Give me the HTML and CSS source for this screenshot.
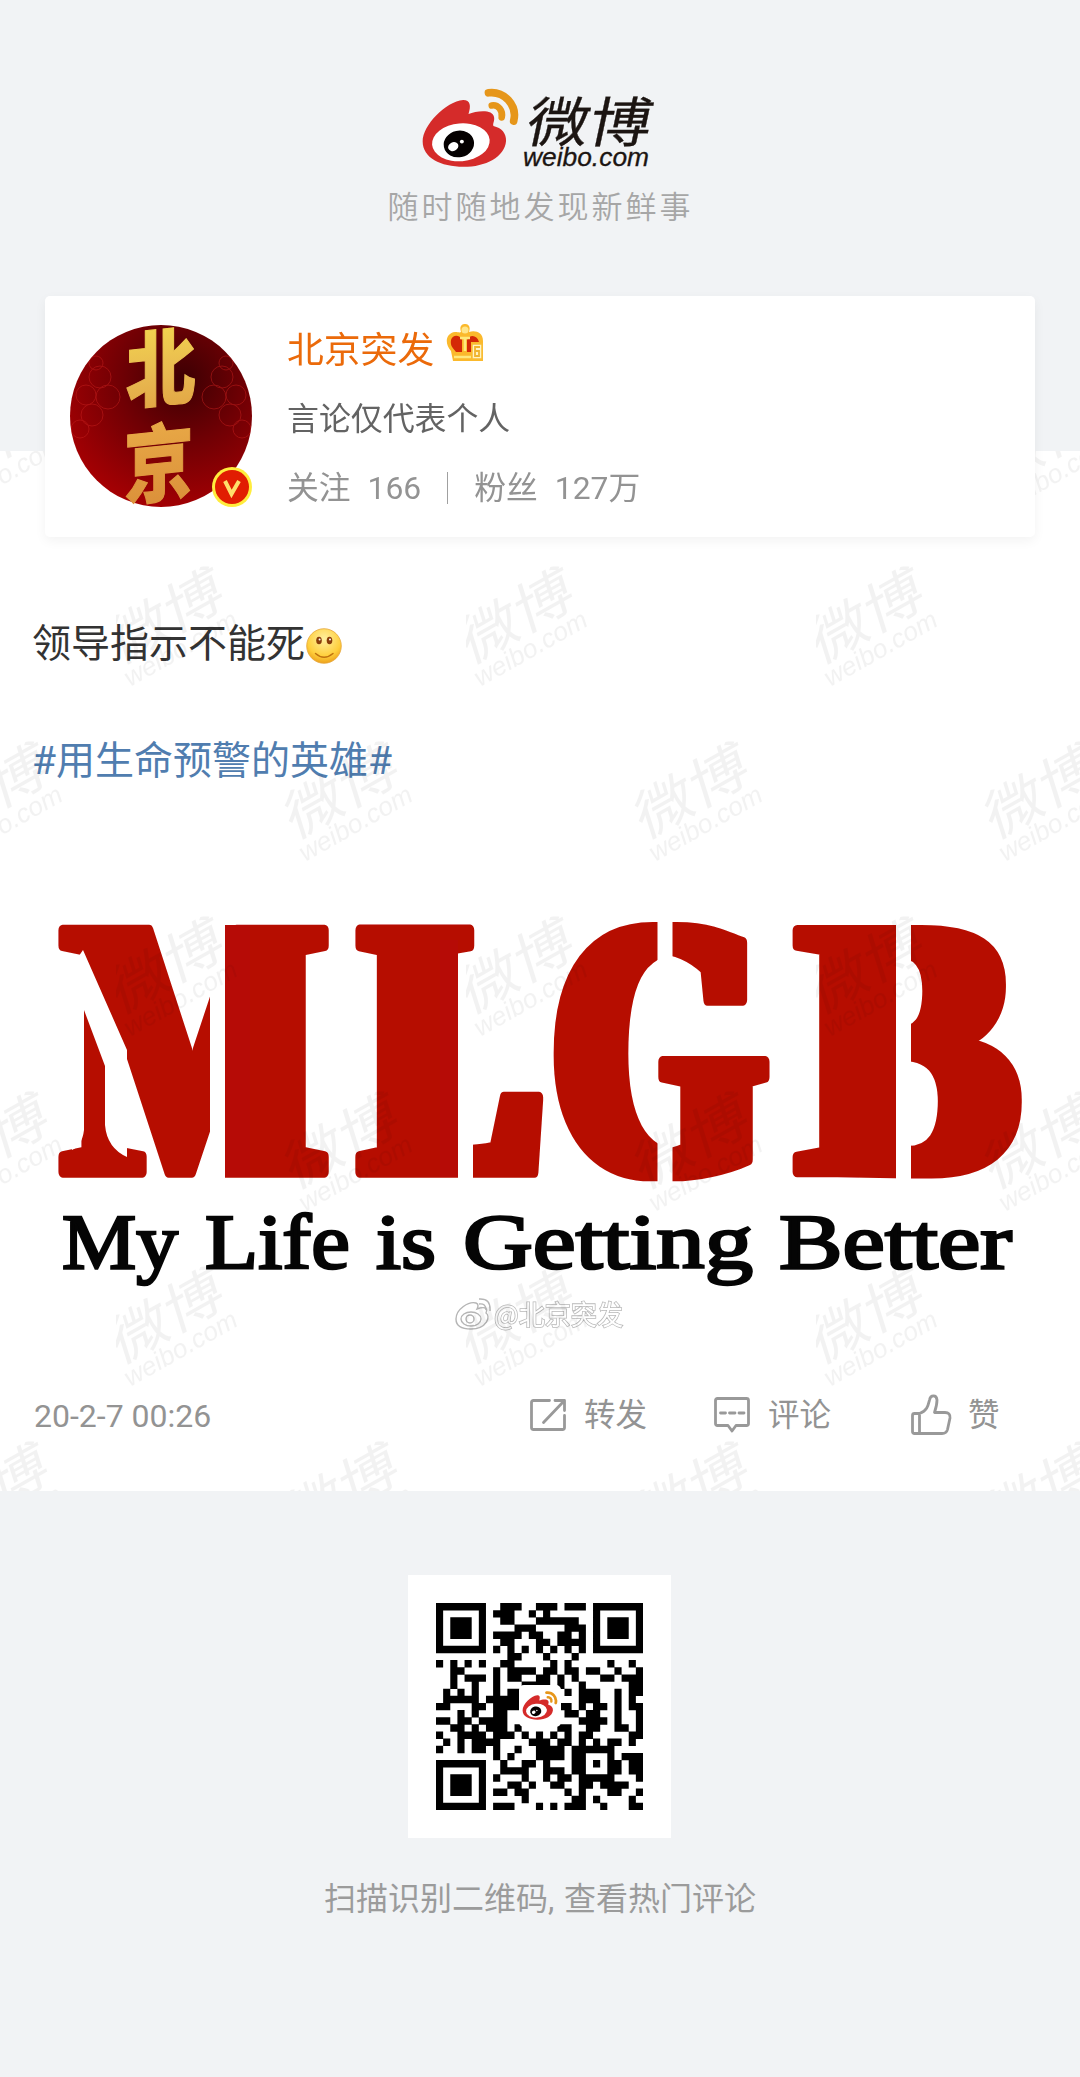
FILE: index.html
```html
<!DOCTYPE html>
<html lang="zh-CN">
<head>
<meta charset="utf-8">
<title>微博</title>
<link rel="stylesheet" href="styles.css">
</head>
<body>
<svg class="defs" aria-hidden="true">
  <defs>
    <symbol id="eye" viewBox="158 54 292 240">
      <path fill="#d52b2a" d="M160 215C160 166 230 94 282 90C304 90 306 108 298 132C322 122 372 116 375 142C377 155 370 161 373 168C398 174 412 190 411 213C407 261 350 291 283 291C214 291 160 264 160 215Z"/>
      <ellipse cx="275" cy="217" rx="87" ry="57" fill="#fff" transform="rotate(-5 275 217)"/>
      <ellipse cx="269" cy="222" rx="46" ry="40" fill="#050101" transform="rotate(-12 269 222)"/>
      <ellipse cx="252" cy="230" rx="16" ry="13" fill="#fff" transform="rotate(-25 252 230)"/>
      <circle cx="278" cy="215" r="6" fill="#fff"/>
      <g fill="none" stroke="#e6961a" stroke-linecap="round">
        <path stroke-width="20" d="M368 106C387 103 402 121 398 142"/>
        <path stroke-width="23" d="M358 68C405 62 446 105 434 153"/>
      </g>
    </symbol>
    <g id="wordmark">
      <text class="wm-cn" x="0" y="0" transform="translate(1 -24.5) skewX(-12) scale(1.15 1)">微博</text>
      <text class="wm-en" x="0" y="0" textLength="126" lengthAdjust="spacingAndGlyphs">weibo.com</text>
    </g>
    <pattern id="marks" width="350" height="350" patternUnits="userSpaceOnUse" patternTransform="translate(116 98)">
      <g class="mark" transform="translate(14 138) rotate(-29.5)"><use href="#wordmark"/></g>
      <g class="mark" transform="translate(189 313) rotate(-29.5)"><use href="#wordmark"/></g>
    </pattern>
    <filter id="wide" filterUnits="userSpaceOnUse" x="340" y="900" width="720" height="300"><feMorphology operator="dilate" radius="12 1"/></filter>
    <filter id="wide-m" filterUnits="userSpaceOnUse" x="40" y="900" width="300" height="300"><feMorphology operator="dilate" radius="8 1"/></filter>
  </defs>
</svg>

<header class="masthead">
  <div class="brand">
    <svg class="brand-eye"><use href="#eye"/></svg>
    <svg class="brand-word" viewBox="0 0 140 84"><use href="#wordmark" x="4" y="78"/></svg>
  </div>
  <p class="slogan">随时随地发现新鲜事</p>
</header>

<section class="card">
  <div class="avatar">
    <svg viewBox="0 0 182 182">
      <defs>
        <radialGradient id="redbg" cx=".62" cy=".3" r=".75"><stop offset="0" stop-color="#3c0003"/><stop offset=".45" stop-color="#6f0004"/><stop offset="1" stop-color="#a80003"/></radialGradient>
        <linearGradient id="gold" x1="0" y1="0" x2="0" y2="1"><stop offset="0" stop-color="#f7e04e"/><stop offset=".6" stop-color="#e8b850"/><stop offset="1" stop-color="#e0a040"/></linearGradient>
        <linearGradient id="copper" x1="0" y1="0" x2="0" y2="1"><stop offset="0" stop-color="#ecb04a"/><stop offset="1" stop-color="#d98c38"/></linearGradient>
        <clipPath id="disc"><circle cx="91" cy="91" r="91"/></clipPath>
      </defs>
      <circle cx="91" cy="91" r="91" fill="url(#redbg)"/>
      <g class="clouds" clip-path="url(#disc)">
        <circle cx="16" cy="70" r="10"/><circle cx="30" cy="52" r="11"/><circle cx="38" cy="72" r="12"/><circle cx="22" cy="90" r="11"/><circle cx="10" cy="104" r="9"/><circle cx="26" cy="38" r="7"/>
        <circle cx="166" cy="70" r="10"/><circle cx="152" cy="52" r="11"/><circle cx="144" cy="72" r="12"/><circle cx="160" cy="90" r="11"/><circle cx="172" cy="104" r="9"/><circle cx="156" cy="38" r="7"/>
      </g>
      <text class="glyph" fill="url(#gold)" stroke="url(#gold)" transform="translate(56 78) skewY(-6) scale(.94 1.13)">北</text>
      <text class="glyph" fill="url(#copper)" stroke="url(#copper)" transform="translate(54 173) skewY(-6) scale(.94 1.13)">京</text>
    </svg>
    <svg class="vip" viewBox="0 0 42 42">
      <circle cx="21" cy="21" r="20" fill="#ffec3d"/><circle cx="21" cy="21" r="17" fill="#e11d02"/>
      <path d="M14 15L20.5 28L28 15" fill="none" stroke="#ffdf6b" stroke-width="4"/>
    </svg>
  </div>
  <div class="who">
    <div class="name">北京突发
      <svg class="crown" viewBox="0 0 38 38">
        <path fill="#fbb92c" d="M7 37L5 27C-2 19 0 9 9 8C12 8 14 9 15 8C13 2 16 0 19 0C22 0 25 2 23 8C29 6 37 8 37 17V37Z"/>
        <circle cx="19" cy="6" r="3.5" fill="#ffe68a"/>
        <path fill="#d42807" d="M5 16C7 10 14 11 16 16V28H10C7 24 4 22 5 16ZM21 16C24 10 31 11 33 18H25V28H21Z"/>
        <path d="M14 14H24M19 14V27M8 33H25" fill="none" stroke="#ffe87c" stroke-width="2.6"/>
        <path d="M26 20H36V35H26Z" fill="#fff3c4" stroke="#f9bd35" stroke-width="1.5"/>
        <path d="M34 23H29V32H33V27H29" fill="none" stroke="#f0b42f" stroke-width="1.8"/>
      </svg>
    </div>
    <div class="bio">言论仅代表个人</div>
    <div class="stats"><span>关注</span><span>166</span><i></i><span>粉丝</span><span>127万</span></div>
  </div>
</section>

<main class="post">
  <p class="line">领导指示不能死<svg class="smile" viewBox="0 0 36 36">
    <defs><radialGradient id="face" cx=".5" cy=".3" r=".7"><stop offset="0" stop-color="#fff0a0"/><stop offset=".7" stop-color="#ffcf3c"/><stop offset="1" stop-color="#eda21c"/></radialGradient></defs>
    <circle cx="18" cy="18" r="17.3" fill="url(#face)" stroke="#e6a63b" stroke-width=".8"/>
    <ellipse cx="13" cy="12.500" rx="2.800" ry="3.800" fill="#8a3d0a"/><ellipse cx="23.500" cy="12.500" rx="2.800" ry="3.800" fill="#8a3d0a"/>
    <circle cx="13.600" cy="11.500" r="1" fill="#fff"/><circle cx="24" cy="11.500" r="1" fill="#fff"/>
    <path d="M9.500 25.500Q18 33 27 25.500" fill="none" stroke="#c0730f" stroke-width="1.500" stroke-linecap="round"/></svg></p>
  <p class="line topic">#用生命预警的英雄#</p>

  <svg class="poster" viewBox="34 890 1012 460">
    <g class="stencil">
      <g filter="url(#wide-m)"><text transform="translate(66 1171) scale(.748 1)">M</text></g>
      <g filter="url(#wide)">
        <text transform="translate(367 1171) scale(.70 1)">L</text>
        <text transform="translate(557 1171) scale(.715 1)">G</text>
        <text transform="translate(804 1171) scale(.86 1)">B</text>
      </g>
      <path d="M225 925H250V1177H225ZM440 940H458V1177H440Z"/>
    </g>
    <g class="cuts">
      <path d="M217.500 915V1185M465.500 1070V1185M665 910V1035M665 1140V1200M903.500 915V1185"/>
      <path class="gap" d="M83 950L127 1050V1157Q107 1148 105 1125V1066L84 1010V1130Q82 1146 72 1150V966Z"/>
    </g>
    <text class="motto"><tspan x="62" y="1268" textLength="116" lengthAdjust="spacingAndGlyphs">My</tspan> <tspan x="205" textLength="145" lengthAdjust="spacingAndGlyphs">Life</tspan> <tspan x="376" textLength="60" lengthAdjust="spacingAndGlyphs">is</tspan> <tspan x="463" textLength="290" lengthAdjust="spacingAndGlyphs">Getting</tspan> <tspan x="779" textLength="233" lengthAdjust="spacingAndGlyphs">Better</tspan></text>
    <g class="credit">
      <g fill="#fff" stroke="#b5b5b5" stroke-width="1.400">
        <path d="M456 1319C456 1309 469 1301 476 1303C479 1304 478 1307 477 1309C485 1306 488 1308 486 1313C491 1316 487 1329 471 1329C461 1329 456 1325 456 1319Z"/>
        <ellipse cx="471" cy="1319" rx="10" ry="7"/><circle cx="470" cy="1319" r="4"/>
        <path d="M479 1304Q486 1303 486 1310M479 1299Q491 1298 490 1311" fill="none"/>
      </g>
      <text x="494" y="1325" textLength="129" lengthAdjust="spacingAndGlyphs">@北京突发</text>
    </g>
  </svg>

  <div class="bar">
    <time>20-2-7 00:26</time>
    <div class="act share"><svg width="36" height="34" viewBox="0 0 36 34"><path d="M19.500 2.500H3.500Q1.500 2.500 1.500 4.500V29.500Q1.500 31.500 3.500 31.500H32.500Q34.500 31.500 34.500 29.500V17.500M25 2.500H34.500V12.500M34 3L13.500 24.500"/></svg><span>转发</span></div>
    <div class="act comment"><svg width="36" height="37" viewBox="0 0 36 37"><path d="M3.500 2.500H32.500Q34.500 2.500 34.500 4.500V27.500Q34.500 29.500 32.500 29.500H22L18 35L14 29.500H3.500Q1.500 29.500 1.500 27.500V4.500Q1.500 2.500 3.500 2.500ZM6.500 17H11.500M15.500 17H21M25 17H30"/></svg><span>评论</span></div>
    <div class="act like"><svg width="41" height="41" viewBox="0 0 41 41"><path d="M3.500 19.500H8.500C16 17 17 12 18.500 6C19.500 .5 25.500 .5 26 6C26 11 25 14 23.500 18.500H34Q39.500 18.500 39 24L36.500 35.500Q35.500 39.500 31 39.500H3.500Q1.500 39.500 1.500 37.500V21.500Q1.500 19.500 3.500 19.500ZM8.500 19.500V39.500"/></svg><span>赞</span></div>
  </div>
  <svg class="watermark" width="1080" height="1040"><rect width="1080" height="1040" fill="url(#marks)"/></svg>
</main>

<footer class="foot">
  <div class="qr">
    <svg viewBox="0 0 29 29"><path id="modules"/></svg>
    <div class="qr-logo"><svg><use href="#eye"/></svg></div>
  </div>
  <p class="hint">扫描识别二维码, 查看热门评论</p>
</footer>
<script src="script.js"></script>
</body>
</html>
```
FILE: styles.css
```css
* { box-sizing: border-box; }
body {
  margin: 0;
  width: 1080px;
  background: #f1f3f5;
  font-family: Roboto, "Noto Sans CJK SC", sans-serif;
  display: flex;
  flex-direction: column;
}
p { margin: 0; }
svg { display: block; }
.defs { position: absolute; width: 0; height: 0; }

.wm-cn { font: 400 54px "Noto Sans CJK SC", sans-serif; }
.wm-en { font: italic 400 26px "Liberation Sans", sans-serif; }
.mark { fill: #000; fill-opacity: .05; }

.masthead { height: 296px; padding-top: 88px; display: flex; flex-direction: column; align-items: center; }
.brand { display: flex; width: 240px; height: 84px; padding-left: 2px; fill: #1c1512; }
.brand-eye { width: 97px; height: 80px; flex: none; }
.brand-word { width: 140px; height: 84px; overflow: visible; flex: none; stroke: #1c1512; stroke-width: .3px; }
.slogan {
  margin-top: 11px;
  line-height: 44px;
  padding-left: 1px;
  font-size: 31px;
  letter-spacing: 3px;
  font-weight: 350;
  font-family: "Noto Sans CJK SC", sans-serif;
  color: #a6a6a6;
}

.card {
  position: relative;
  z-index: 2;
  height: 241px;
  margin: 0 45px;
  padding: 29px 25px;
  background: #fff;
  border-radius: 5px;
  box-shadow: 0 4px 12px rgba(0, 0, 0, .05);
  display: flex;
  gap: 35px;
}
.avatar { position: relative; width: 182px; height: 182px; flex: none; }
.clouds { fill: none; stroke: #c8201f; stroke-width: 1; opacity: .5; }
.glyph { font: 800 74px "Noto Sans CJK SC", sans-serif; stroke-width: 1; }
.vip { position: absolute; right: -1px; bottom: -1px; width: 42px; height: 42px; }
.who { display: flex; flex-direction: column; padding-top: 1px; }
.name { display: flex; gap: 12px; height: 50px; line-height: 50px; font-size: 36.800px; color: #eb6a0a; }
.crown { width: 38px; height: 38px; margin-top: -2px; }
.bio { margin-top: 18px; height: 50px; line-height: 50px; font-size: 31.900px; color: #636363; }
.stats { display: flex; align-items: center; margin-top: 19px; height: 50px; line-height: 50px; font-size: 31.800px; color: #939393; gap: 17px; }
.stats i { width: 1px; height: 32px; margin: 0 9px; background: #a0a0a0; }

.post { position: relative; height: 1040px; margin-top: -86px; padding-top: 164px; background: #fff; }
.line { display: flex; height: 58px; line-height: 58px; padding-left: 32px; font-size: 39px; color: #333; }
.smile { width: 36px; height: 36px; margin: 13px 0 0 1px; }
.topic { margin-top: 59px; color: #507daf; }
.poster { width: 1012px; height: 460px; margin: 100px 0 0 34px; }
.stencil { fill: #b60b06; }
.stencil text { font: 700 366px "Liberation Serif", serif; stroke: #b60b06; stroke-width: 10px; stroke-linejoin: round; vector-effect: non-scaling-stroke; }
.cuts path { fill: none; stroke: #fff; stroke-width: 15px; }
.cuts .gap { fill: #fff; stroke: none; }
.motto { font: 400 79px "Liberation Serif", serif; fill: #050505; stroke: #050505; stroke-width: 2.600px; }
.credit text { font: 400 27px "Noto Sans CJK SC", sans-serif; fill: #fff; stroke: #b8b8b8; stroke-width: 1.600px; paint-order: stroke; }

.bar { display: flex; align-items: center; position: relative; height: 60px; margin-top: 36px; padding-left: 34px; font-size: 32px; color: #939393; }
.bar time { width: 496px; flex: none; }
.act { display: flex; align-items: center; font-size: 31.500px; margin-top: -3px; line-height: 44px; }
.act span { margin-top: 2px; }
.act svg { fill: none; stroke: #999; stroke-width: 2.800; stroke-linecap: round; stroke-linejoin: round; flex: none; }
.share { width: 184px; gap: 18px; }
.comment { width: 197px; gap: 18px; }
.like { gap: 16px; }
.watermark { position: absolute; left: 0; top: 0; }

.foot { display: flex; flex-direction: column; align-items: center; padding-top: 84px; height: 586px; }
.qr { position: relative; left: -1px; width: 263px; height: 263px; background: #fff; padding: 28px; }
.qr > svg { width: 207px; height: 207px; fill: #000; }
.qr-logo { position: absolute; left: 111px; top: 110px; width: 42px; height: 42px; background: #fff; border-radius: 5px; padding: 6px 3px; }
.qr-logo svg { width: 36px; height: 29px; }
.hint { margin-top: 38px; line-height: 46px; font-size: 32px; word-spacing: 2px; color: #9b9b9b; }
```
FILE: script.js
```js
// QR symbol, one string per row: inclusive column runs of dark modules.
const rows = [
  "0-6,9-11,14-16,18-20,22-28",
  "0,6,8-10,13,15,22,28",
  "0,2-4,6,9-10,14-19,22,24-26,28",
  "0,2-4,6,11-13,18-20,22,24-26,28",
  "0,2-4,6,8-11,13-14,17-18,20,22,24-26,28",
  "0,6,9-10,14-15,17-20,22,28",
  "0-6,8,10,12,14,16,18,20,22-28",
  "10-11,15,19",
  "0,2,4,6,9-10,16,18,24,27",
  "2-3,8,10-13,15-16,18-19,21-22,25,28",
  "2,4-6,8,10-11,14-15,17,19,23-24,26-28",
  "2,5,8,12-15,17,20,27-28",
  "1,3,5,8,10-11,18,20-22,25,27-28",
  "1-5,7-11,20-22,25,27",
  "0-1,5-6,8-11,17-18,20,22-23,25,27-28",
  "3,5,8-9,18-19,21-22,25,28",
  "0-1,3-4,6-9,20-23,25,28",
  "2-3,5,7-9,11,17-18,21-22,25-26,28",
  "0,3-6,8-10,12,14,16,18,20-21,27-28",
  "1,3,5-8,13-15,17-18,20,22,24-25,27",
  "0,3,5-6,8,11,14-17,19-24",
  "8,10,14-17,19-20,24,26-28",
  "0-6,9,12-13,15,19-20,22,24-25,27-28",
  "0,6,9-12,15-17,19-20,24-25,27-28",
  "0,2-4,6,8,12,15,17-18,20-24,28",
  "0,2-4,6,10-11,13,16-17,20-21,23-25,26",
  "0,2-4,6,8-9,11-12,18,20,24-25,28",
  "0,6,12,19-20,22,27",
  "0-6,8-10,14,16,18-20,23,27-28"
];
let d = "";
rows.forEach((row, y) => {
  row.split(",").forEach(run => {
    const [a, b = a] = run.split("-").map(Number);
    const w = b - a + 1;
    d += `M${a} ${y}h${w}v1.04h${-w}z`;
  });
});
document.getElementById("modules").setAttribute("d", d);
```
